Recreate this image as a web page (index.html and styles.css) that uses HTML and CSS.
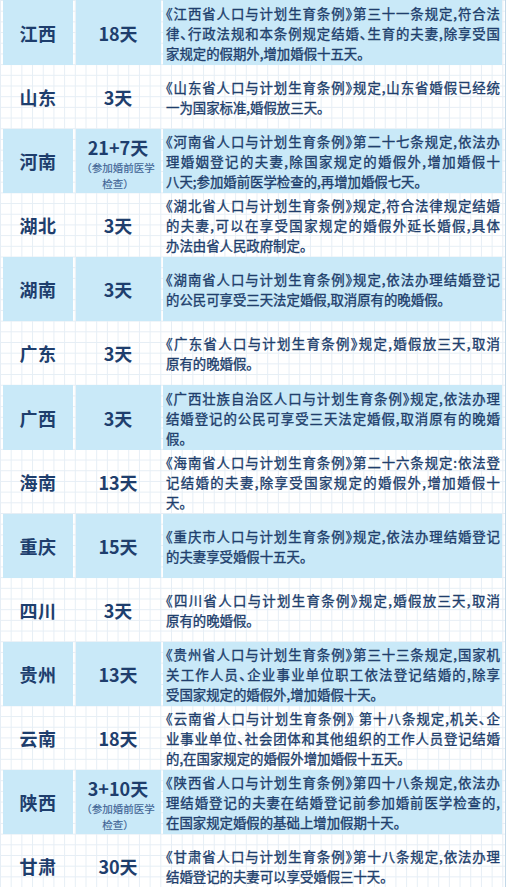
FILE: index.html
```html
<!DOCTYPE html>
<html lang="zh-CN">
<head>
<meta charset="utf-8">
<title>各省婚假规定</title>
<link rel="stylesheet" href="styles.css">
</head>
<body>
<div class="page">
  <div class="table">
    <div class="row blue first">
      <div class="cell name">江西</div>
      <div class="cell days"><span class="num">18天</span></div>
      <div class="cell desc">
        <div class="ln full">《江西省人口与计划生育条例》第三十一条规定,符合法</div>
        <div class="ln full">律、行政法规和本条例规定结婚、生育的夫妻,除享受国</div>
        <div class="ln">家规定的假期外,增加婚假十五天。</div>
      </div>
    </div>
    <div class="row">
      <div class="cell name">山东</div>
      <div class="cell days"><span class="num">3天</span></div>
      <div class="cell desc">
        <div class="ln full">《山东省人口与计划生育条例》规定,山东省婚假已经统</div>
        <div class="ln">一为国家标准,婚假放三天。</div>
      </div>
    </div>
    <div class="row blue">
      <div class="cell name">河南</div>
      <div class="cell days multi"><span class="num">21+7天</span><span class="sub">（参加婚前医学</span><span class="sub">检查）</span></div>
      <div class="cell desc">
        <div class="ln full">《河南省人口与计划生育条例》第二十七条规定,依法办</div>
        <div class="ln full">理婚姻登记的夫妻,除国家规定的婚假外,增加婚假十</div>
        <div class="ln">八天;参加婚前医学检查的,再增加婚假七天。</div>
      </div>
    </div>
    <div class="row">
      <div class="cell name">湖北</div>
      <div class="cell days"><span class="num">3天</span></div>
      <div class="cell desc">
        <div class="ln full">《湖北省人口与计划生育条例》规定,符合法律规定结婚</div>
        <div class="ln full">的夫妻,可以在享受国家规定的婚假外延长婚假,具体</div>
        <div class="ln">办法由省人民政府制定。</div>
      </div>
    </div>
    <div class="row blue">
      <div class="cell name">湖南</div>
      <div class="cell days"><span class="num">3天</span></div>
      <div class="cell desc">
        <div class="ln full">《湖南省人口与计划生育条例》规定,依法办理结婚登记</div>
        <div class="ln">的公民可享受三天法定婚假,取消原有的晚婚假。</div>
      </div>
    </div>
    <div class="row">
      <div class="cell name">广东</div>
      <div class="cell days"><span class="num">3天</span></div>
      <div class="cell desc">
        <div class="ln full">《广东省人口与计划生育条例》规定,婚假放三天,取消</div>
        <div class="ln">原有的晚婚假。</div>
      </div>
    </div>
    <div class="row blue">
      <div class="cell name">广西</div>
      <div class="cell days"><span class="num">3天</span></div>
      <div class="cell desc">
        <div class="ln full">《广西壮族自治区人口与计划生育条例》规定,依法办理</div>
        <div class="ln full">结婚登记的公民可享受三天法定婚假,取消原有的晚婚</div>
        <div class="ln">假。</div>
      </div>
    </div>
    <div class="row">
      <div class="cell name">海南</div>
      <div class="cell days"><span class="num">13天</span></div>
      <div class="cell desc">
        <div class="ln full">《海南省人口与计划生育条例》第二十六条规定:依法登</div>
        <div class="ln full">记结婚的夫妻,除享受国家规定的婚假外,增加婚假十</div>
        <div class="ln">天。</div>
      </div>
    </div>
    <div class="row blue">
      <div class="cell name">重庆</div>
      <div class="cell days"><span class="num">15天</span></div>
      <div class="cell desc">
        <div class="ln full">《重庆市人口与计划生育条例》规定,依法办理结婚登记</div>
        <div class="ln">的夫妻享受婚假十五天。</div>
      </div>
    </div>
    <div class="row">
      <div class="cell name">四川</div>
      <div class="cell days"><span class="num">3天</span></div>
      <div class="cell desc">
        <div class="ln full">《四川省人口与计划生育条例》规定,婚假放三天,取消</div>
        <div class="ln">原有的晚婚假。</div>
      </div>
    </div>
    <div class="row blue">
      <div class="cell name">贵州</div>
      <div class="cell days"><span class="num">13天</span></div>
      <div class="cell desc">
        <div class="ln full">《贵州省人口与计划生育条例》第三十三条规定,国家机</div>
        <div class="ln full">关工作人员、企业事业单位职工依法登记结婚的,除享</div>
        <div class="ln">受国家规定的婚假外,增加婚假十天。</div>
      </div>
    </div>
    <div class="row">
      <div class="cell name">云南</div>
      <div class="cell days"><span class="num">18天</span></div>
      <div class="cell desc">
        <div class="ln full">《云南省人口与计划生育条例》 第十八条规定,机关、企</div>
        <div class="ln full">业事业单位、社会团体和其他组织的工作人员登记结婚</div>
        <div class="ln">的,在国家规定的婚假外增加婚假十五天。</div>
      </div>
    </div>
    <div class="row blue">
      <div class="cell name">陕西</div>
      <div class="cell days multi"><span class="num">3+10天</span><span class="sub">（参加婚前医学</span><span class="sub">检查）</span></div>
      <div class="cell desc">
        <div class="ln full">《陕西省人口与计划生育条例》第四十八条规定,依法办</div>
        <div class="ln full">理结婚登记的夫妻在结婚登记前参加婚前医学检查的,</div>
        <div class="ln">在国家规定婚假的基础上增加假期十天。</div>
      </div>
    </div>
    <div class="row">
      <div class="cell name">甘肃</div>
      <div class="cell days"><span class="num">30天</span></div>
      <div class="cell desc">
        <div class="ln full">《甘肃省人口与计划生育条例》第十八条规定,依法办理</div>
        <div class="ln">结婚登记的夫妻可以享受婚假三十天。</div>
      </div>
    </div>
  </div>
</div>
</body>
</html>
```
FILE: styles.css
```css
html, body {
  margin: 0;
  padding: 0;
  overflow: hidden;
}
body {
  background-color: #ffffff;
  font-family: "Noto Sans CJK SC", "Noto Sans", sans-serif;
  color: #1f3d6b;
}
.page {
  width: 505px;
  border-right: 1.5px solid #c2d8e8;
  background-color: #ffffff;
  background-image:
    linear-gradient(to right, #e6eef5 1px, transparent 1px),
    linear-gradient(to bottom, #e6eef5 1px, transparent 1px);
  background-size: 10.7px 10.7px;
  min-height: 900px;
}
.table {
  display: flex;
  flex-direction: column;
  padding-left: 3px;
}
.row {
  display: grid;
  grid-template-columns: 70px 85px 339px;
  column-gap: 2.5px;
  height: 64.1px;
}
.row.first {
  height: 65px;
}
.blue .cell {
  background-color: #c9e9f8;
}
.cell {
  display: flex;
  flex-direction: column;
  justify-content: center;
  min-width: 0;
}
.name {
  align-items: center;
  font-size: 18px;
  font-weight: 700;
  letter-spacing: 0.5px;
  color: #1e3e6d;
}
.days {
  align-items: center;
  text-align: center;
  color: #1e3e6d;
}
.days.multi {
  padding-top: 3px;
}
.num {
  font-size: 18px;
  font-weight: 700;
  line-height: 26px;
}
.sub {
  font-size: 10.5px;
  line-height: 15.2px;
  color: #3f6394;
  white-space: nowrap;
  -webkit-text-stroke: 0.15px #3f6394;
}
.desc {
  padding: 0 2px 0 3px;
  font-size: 13.4px;
  line-height: 20px;
  font-weight: 400;
  color: #203e6c;
  -webkit-text-stroke: 0.35px #203e6c;
  font-feature-settings: "halt";
}
.ln {
  white-space: nowrap;
}
.ln.full {
  text-align: justify;
  text-align-last: justify;
}
```
